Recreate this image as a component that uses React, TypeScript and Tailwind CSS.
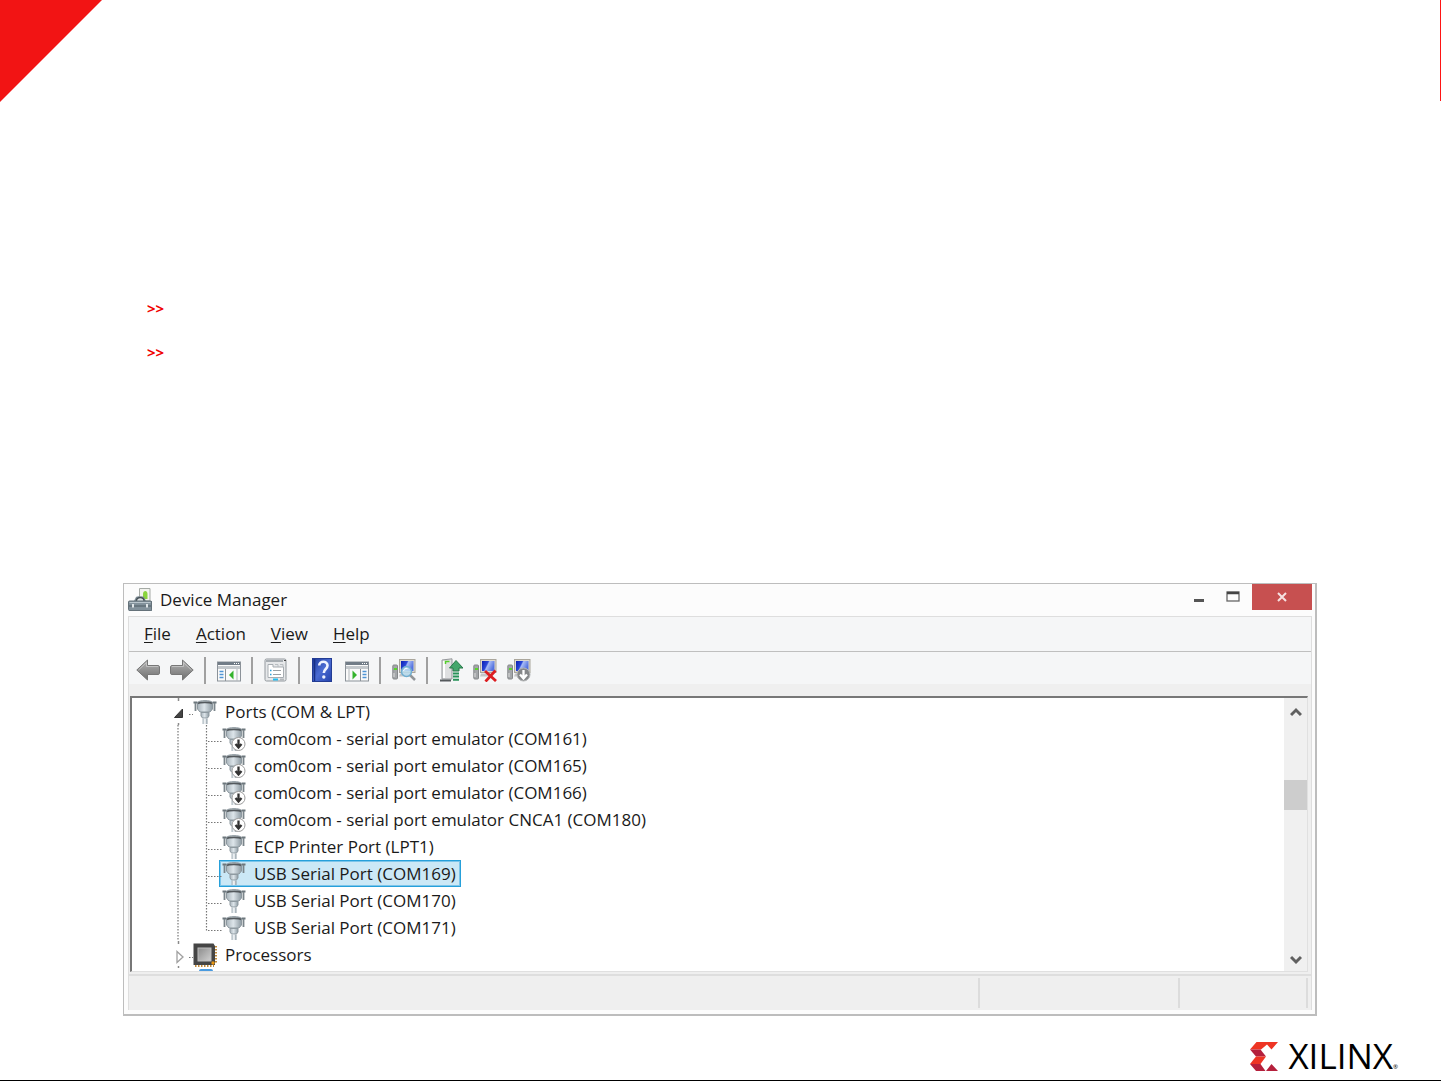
import type { ReactNode } from "react";

function Defs() {
  return (
    <svg width="0" height="0" className="absolute" aria-hidden="true">
      <defs>
        <linearGradient id="steel" x1="0" y1="0" x2="0" y2="1">
          <stop offset="0" stopColor="#b5b5b5" />
          <stop offset="1" stopColor="#6e6e6e" />
        </linearGradient>
        <linearGradient id="metal" x1="0" y1="0" x2="1" y2="0">
          <stop offset="0" stopColor="#a9b4bb" />
          <stop offset="0.45" stopColor="#dde5ea" />
          <stop offset="1" stopColor="#8d9aa2" />
        </linearGradient>
        <linearGradient id="screen" x1="0" y1="0" x2="1" y2="0.4">
          <stop offset="0" stopColor="#0a1fb4" />
          <stop offset="0.45" stopColor="#2c49d8" />
          <stop offset="0.55" stopColor="#a9bdf5" />
          <stop offset="1" stopColor="#5473e0" />
        </linearGradient>
        <linearGradient id="book" x1="0" y1="0" x2="1" y2="1">
          <stop offset="0" stopColor="#1d3a9c" />
          <stop offset="0.5" stopColor="#4a6bd2" />
          <stop offset="1" stopColor="#2443ad" />
        </linearGradient>
        <linearGradient id="chip" x1="0" y1="0" x2="1" y2="1">
          <stop offset="0" stopColor="#8c8c8c" />
          <stop offset="1" stopColor="#d0d0d0" />
        </linearGradient>
      </defs>
    </svg>
  );
}

function Icon({ children }: { children: ReactNode }) {
  return (
    <svg width="24" height="24" viewBox="0 0 24 24" className="shrink-0" aria-hidden="true">
      {children}
    </svg>
  );
}

const Arrow = ({ right }: { right?: boolean }) => (
  <Icon>
    <g transform={right ? "translate(24 0) scale(-1 1)" : undefined}>
      <path d="M.8 12 11.5 2v5.5H22c1 0 1.500.5 1.500 1.500v6c0 1-.5 1.500-1.500 1.500H11.500V22z" fill="url(#steel)" stroke="#777" />
      <path d="M2.500 12 10.500 4.500V8.500H22" fill="none" stroke="#c9c9c9" strokeWidth=".8" />
    </g>
  </Icon>
);

const PaneIcon = ({ right }: { right?: boolean }) => (
  <Icon>
    <rect x=".5" y="4" width="23" height="19" fill="#fafafa" stroke="#8b9299" />
    <rect x="1" y="4" width="22" height="3" fill="#717c87" />
    <path d="M17 5.500h1M19 5.500h1M21 5.500h1" stroke="#fff" />
    <path d="M1 9.500h22" stroke="#c3c8cc" strokeWidth="3" />
    <g transform={right ? "translate(24 0) scale(-1 1)" : undefined}>
      <path d="M8.500 11v12" stroke="#8b9299" />
      <path d="M2.500 13.500h4M2.500 16.500h4M2.500 19.500h4" stroke="#4e94d5" strokeWidth="1.300" />
      <path d="m12 17 4.500-4.500v9z" fill="#35b32c" />
      <path d="M20 11v12" stroke="#b4b9bd" />
    </g>
  </Icon>
);

const PropertiesIcon = () => (
  <Icon>
    <rect x="1" y="1" width="21" height="22" rx="1.500" fill="#e6e8ea" stroke="#92989d" />
    <path d="M2 3h17" stroke="#a7adb2" strokeWidth="2" />
    <path d="M20 2.500h2" stroke="#444" />
    <path d="M4 6.500h5V9h10.500v10.500H4z" fill="#fff" stroke="#a7adb2" />
    <path d="M11 6.500h3V9M16 6.500h3V9" stroke="#b9bec2" fill="none" />
    <path d="M6 12.500h1.500M6 16.500h1.500" stroke="#2ba0dc" strokeWidth="1.500" />
    <path d="M9 12.500h8M9 16.500h8" stroke="#9aa0a5" />
    <path d="M9 21.500h5" stroke="#22bdf0" strokeWidth="2" />
    <path d="M16 21.500h4" stroke="#b4b9bd" strokeWidth="2" />
  </Icon>
);

const HelpIcon = () => (
  <Icon>
    <rect x="1.500" y=".5" width="19" height="23" fill="url(#book)" stroke="#233c94" />
    <path d="M3.500 1v22" stroke="#172f84" strokeWidth="1.500" />
    <path d="M8.200 7.500c0-5 8.300-5 8.300 0 0 3.500-3.700 3.500-3.700 7.500" fill="none" stroke="#eef2ff" strokeWidth="2.600" />
    <circle cx="12.800" cy="19" r="1.700" fill="#eef2ff" />
  </Icon>
);

const Computer = () => (
  <g>
    <rect x="7.500" y="1.500" width="15.500" height="13" fill="#ddd9cf" stroke="#aaa69c" />
    <rect x="9" y="3" width="12.500" height="10" fill="url(#screen)" />
    <path d="M8 15.500h10l2 3H7z" fill="#c5c6c8" />
    <rect x=".8" y="7" width="4.700" height="14" rx="1" fill="#a3a6a9" stroke="#85888a" />
    <path d="M2 11h3" stroke="#58d62a" strokeWidth="2" />
    <path d="M2 15v4" stroke="#dedede" />
  </g>
);

const ScanIcon = () => (
  <Icon>
    <Computer />
    <path d="m18 17 5 5" stroke="#929699" strokeWidth="2.500" />
    <circle cx="14.500" cy="13.500" r="5" fill="#b8dcef" fillOpacity=".85" stroke="#6faed0" strokeWidth="1.500" />
    <path d="M11.500 13c.5-2 2-3 4-2.500" stroke="#fff" fill="none" />
  </Icon>
);

const UpdateIcon = () => (
  <Icon>
    <path d="M3 2 13 .8V21H3z" fill="#dfe0e1" stroke="#94979a" />
    <path d="M5 3v17" stroke="#fff" strokeWidth="2" />
    <path d="M6.500 6V3.500h4" stroke="#55ce2c" strokeWidth="1.500" fill="none" />
    <path d="M1 21.500h11v2H1z" fill="#55595c" />
    <path d="M17 2.500 24 10h-4v3h-6v-3h-3.500z" fill="#43a66b" stroke="#28794a" />
    <path d="M14 15.500h6M14 18.500h6M14 21.700h6" stroke="#279258" strokeWidth="2" />
  </Icon>
);

const UninstallIcon = () => (
  <Icon>
    <Computer />
    <path d="m12 13 11 10M22.500 12.500 12.500 23.500" stroke="#dc1d20" strokeWidth="2.800" />
  </Icon>
);

const DisableIcon = () => (
  <Icon>
    <Computer />
    <circle cx="16.500" cy="16.500" r="6.500" fill="#858789" stroke="#b3b5b6" />
    <path d="M16.500 12v8M13 16.500l3.500 4 3.500-4" fill="none" stroke="#fff" strokeWidth="2.300" />
  </Icon>
);

const PortIcon = ({ disabled }: { disabled?: boolean }) => (
  <Icon>
    <path d="M.5 2.500h4M19.500 2.500h4" stroke="#6d777d" strokeWidth="2" />
    <path d="M2.500 3v8M21.500 3v8" stroke="#7b858b" strokeWidth="1.800" />
    <path d="M4.500 2.500c1-2.500 14-2.500 15 0V9l-2.500 3h-10l-2.500-3z" fill="url(#metal)" stroke="#8d989f" />
    <path d="M5 3.500c2-1.600 12-1.600 14 0" stroke="#53595d" strokeWidth="1.800" fill="none" />
    <path d="M8 12.500h8V16l-1.500 2h-5L8 16z" fill="url(#metal)" stroke="#8f9aa1" />
    <path d="M9.500 18.500h5V24h-5z" fill="url(#metal)" />
    <path d="M12 19v5" stroke="#fff" />
    {disabled && (
      <g>
        <circle cx="16.500" cy="17" r="6.500" fill="#fff" stroke="#9c9c9c" />
        <path d="M16.500 12.500v8M13.500 17l3 3.500 3-3.500" stroke="#333" strokeWidth="2.300" fill="none" />
      </g>
    )}
  </Icon>
);

const ProcessorIcon = () => (
  <Icon>
    <path d="M2 23h19M23 3v18" stroke="#c08a3a" strokeWidth="2" strokeDasharray="1.500 1.500" />
    <path d="M.5.500h20L22 3v19H.5z" fill="#454545" />
    <rect x="5" y="5" width="13" height="13" fill="url(#chip)" stroke="#bdbdbd" />
    <circle cx="20" cy="20" r="1.700" fill="#e8960e" />
  </Icon>
);

const ManagerIcon = () => (
  <Icon>
    <path d="M11.500.5h10.500V13H11.500z" fill="#f2f3ee" stroke="#a5aaa5" />
    <path d="M15 6c0-4 4.500-4 4.500 0v5H15z" fill="#8ad43c" />
    <path d="M1 13h5l2-4c.5-1 7.500-1 8 0l2 4h6v10H1z" fill="#7d8b94" />
    <path d="M8.500 13c0-4.500 7.500-4.500 7.500 0" fill="#dce2e5" stroke="#414b51" strokeWidth="1.300" />
    <rect x=".5" y="13" width="23" height="9.500" rx="1" fill="#82919b" stroke="#65727a" />
    <path d="M1.500 14.500h21" stroke="#b8c4cb" />
    <path d="M1 18h22" stroke="#4f5c65" />
    <path d="M5 16v3.500M19 16v3.500" stroke="#dfe5e8" strokeWidth="2" />
  </Icon>
);

const tools: ({ label: string; icon: ReactNode } | null)[] = [
  { label: "Back", icon: <Arrow /> },
  { label: "Forward", icon: <Arrow right /> },
  null,
  { label: "Show/Hide Console Tree", icon: <PaneIcon /> },
  null,
  { label: "Properties", icon: <PropertiesIcon /> },
  null,
  { label: "Help topics", icon: <HelpIcon /> },
  { label: "Show/Hide Action Pane", icon: <PaneIcon right /> },
  null,
  { label: "Scan for hardware changes", icon: <ScanIcon /> },
  null,
  { label: "Update Driver Software", icon: <UpdateIcon /> },
  { label: "Uninstall", icon: <UninstallIcon /> },
  { label: "Disable", icon: <DisableIcon /> },
];

const ports = [
  { name: "com0com - serial port emulator (COM161)", disabled: true },
  { name: "com0com - serial port emulator (COM165)", disabled: true },
  { name: "com0com - serial port emulator (COM166)", disabled: true },
  { name: "com0com - serial port emulator CNCA1 (COM180)", disabled: true },
  { name: "ECP Printer Port (LPT1)" },
  { name: "USB Serial Port (COM169)", selected: true },
  { name: "USB Serial Port (COM170)" },
  { name: "USB Serial Port (COM171)" },
];

function GroupRow({ label, open, icon }: { label: string; open?: boolean; icon: ReactNode }) {
  return (
    <div className="flex h-[27px] items-center">
      <svg width="61" height="27" className="shrink-0" aria-hidden="true">
        <path d="M46.500 0v3M46.500 25v2" stroke="#8a8a8a" strokeWidth="1.500" />
        {open ? (
          <path d="M50.500 11v8.500h-8z" fill="#444" stroke="#333" />
        ) : (
          <path d="M45 10.500v11l6-5.500z" fill="#fff" stroke="#a0a0a0" strokeWidth="1.300" />
        )}
        <path d="M57 16.500h4" stroke="#777" strokeDasharray="1.500 1.500" />
      </svg>
      <button className="flex items-center gap-2 whitespace-nowrap">
        {icon}
        {label}
      </button>
    </div>
  );
}

function PortRow({ name, disabled, selected, last }: { name: string; disabled?: boolean; selected?: boolean; last?: boolean }) {
  return (
    <li className="flex h-[27px] items-center">
      <svg width="87" height="27" className="relative shrink-0 overflow-visible" aria-hidden="true">
        <path d="M46 0v27" stroke="#777" strokeWidth="1.200" strokeDasharray="1.500 1.500" />
        <path d={last ? "M74.500 0v17" : "M74.500 0v27"} stroke="#777" strokeWidth="1.200" strokeDasharray="1.500 1.500" />
        <path d="M76 16.500h15" stroke="#777" strokeDasharray="1.500 1.500" />
      </svg>
      <button
        className={
          selected
            ? "flex h-[27px] items-center gap-2 whitespace-nowrap border border-[#26a0da] bg-[#cbe8f6] px-[2px] pr-[4px] outline-1 -outline-offset-2 outline-[#7cc5ea]"
            : "flex h-[27px] items-center gap-2 whitespace-nowrap border border-transparent px-[2px] pr-[4px]"
        }
      >
        <PortIcon disabled={disabled} />
        {name}
      </button>
    </li>
  );
}

function DeviceManager() {
  return (
    <section className="mr-[124px] ml-[123px] border border-r-2 border-b-2 border-[#bdbdbd] bg-[#fcfcfc] pr-[3px] pb-1 pl-1 text-[17px] leading-6 text-[#1a1a1a]">
      <header className="flex h-8 items-start">
        <div className="flex flex-1 items-center gap-2 pt-1">
          <ManagerIcon />
          <h1>Device Manager</h1>
        </div>
        <button aria-label="Minimize" className="flex h-[26px] w-[34px] items-center justify-center">
          <svg width="12" height="12" aria-hidden="true">
            <path d="M1 9.500h10" stroke="#555" strokeWidth="3" />
          </svg>
        </button>
        <button aria-label="Maximize" className="mr-[2px] flex h-[26px] w-[34px] items-center justify-center">
          <svg width="14" height="12" aria-hidden="true">
            <rect x="1" y="1" width="12" height="9" fill="none" stroke="#666" strokeWidth="1.300" />
            <path d="M1 2h12" stroke="#444" strokeWidth="2.500" />
          </svg>
        </button>
        <button aria-label="Close" className="flex h-[26px] w-[60px] items-center justify-center bg-[#c75050]">
          <svg width="10" height="10" aria-hidden="true">
            <path d="m1 1 8 8M9 1 1 9" stroke="#f6e2e2" strokeWidth="2" />
          </svg>
        </button>
      </header>
      <div className="border-x border-t border-[#dedede] bg-[#efefef]">
        <nav className="flex h-[35px] items-center gap-[25px] border-b border-[#bfbfbf] bg-[#f5f6f7] pl-[15px]">
          {["File", "Action", "View", "Help"].map((item) => (
            <button key={item}>
              <span className="underline decoration-1 underline-offset-2">{item[0]}</span>
              {item.slice(1)}
            </button>
          ))}
        </nav>
        <div className="flex h-8 items-center gap-[10px] bg-[#f5f6f7] pt-1 pl-[7px]">
          {tools.map((tool, i) =>
            tool ? (
              <button key={i} aria-label={tool.label}>
                {tool.icon}
              </button>
            ) : (
              <span key={i} className="mr-px h-[27px] w-[2px] bg-[#a0a0a0]" />
            ),
          )}
        </div>
        <div className="mt-3 mr-[3px] ml-px flex border-2 border-r border-b border-t-[#777] border-r-[#e0e0e0] border-b-[#e0e0e0] border-l-[#777] bg-white">
          <div className="min-w-0 flex-1 overflow-hidden">
            <GroupRow label="Ports (COM & LPT)" open icon={<PortIcon />} />
            <ul>
              {ports.map((port, i) => (
                <PortRow key={port.name} {...port} last={i === ports.length - 1} />
              ))}
            </ul>
            <GroupRow label="Processors" icon={<ProcessorIcon />} />
            <div className="h-[3px] pt-px pl-[67px]">
              <div className="h-[2px] w-[14px] rounded-t bg-[#4a9be0]" />
            </div>
          </div>
          <div className="flex w-[23px] flex-col items-center bg-[#f0f0f0]">
            <button aria-label="Scroll up" className="flex h-7 w-full items-center justify-center">
              <svg width="12" height="10" aria-hidden="true">
                <path d="m1 8 5-5 5 5" fill="none" stroke="#606060" strokeWidth="3" />
              </svg>
            </button>
            <div className="mt-[54px] h-[30px] w-full bg-[#cdcdcd]" />
            <button aria-label="Scroll down" className="mt-auto flex h-[23px] w-full items-center justify-center">
              <svg width="12" height="10" aria-hidden="true">
                <path d="m1 2 5 5 5-5" fill="none" stroke="#606060" strokeWidth="3" />
              </svg>
            </button>
          </div>
        </div>
        <footer className="mt-[2px] flex h-[36px] border-t-2 border-[#dedede] pr-[3px]">
          <div className="my-[2px] flex-1 border-r-2 border-[#dcdcdc]" />
          <div className="my-[2px] w-[200px] border-r-2 border-[#dcdcdc]" />
          <div className="my-[2px] w-[128px] border-r-2 border-[#dcdcdc]" />
        </footer>
      </div>
    </section>
  );
}

export default function App() {
  return (
    <main className="flex min-h-screen flex-col border-b border-black bg-white font-['Open_Sans','Noto_Sans',sans-serif]">
      <Defs />
      <div className="flex justify-between">
        <svg width="102" height="102" aria-hidden="true">
          <path d="M0 0h102L0 102z" fill="#f21414" />
        </svg>
        <div className="h-[101px] w-px bg-[#ff1414]" />
      </div>
      <ul className="mt-[184px] mb-[209px] pl-[147px] text-[15px] font-bold text-[#f00000]">
        <li className="flex h-11 items-center">&gt;&gt;</li>
        <li className="flex h-11 items-center">&gt;&gt;</li>
      </ul>
      <DeviceManager />
      <div className="mt-auto mb-1 flex h-10 items-center justify-end gap-[10px] pr-[43px]">
        <svg width="28" height="29" viewBox="0 0 28 29" aria-hidden="true">
          <path d="M6.500 0H28l-6.500 7.500L17 2.500 11 7.500H0z" fill="#ee3524" />
          <path d="M0 7.500h10.500L16 14.500H6z" fill="#b5203c" />
          <path d="M6 14.500h10L10.500 22H0z" fill="#ee3524" />
          <path d="M0 22h10.500l5 7H6zM21.500 22l6.500 7H16z" fill="#b5203c" />
        </svg>
        <div className="flex items-baseline text-black">
          <span className="text-[35px] leading-10">XILINX</span>
          <span className="text-[6px]">®</span>
        </div>
      </div>
    </main>
  );
}
